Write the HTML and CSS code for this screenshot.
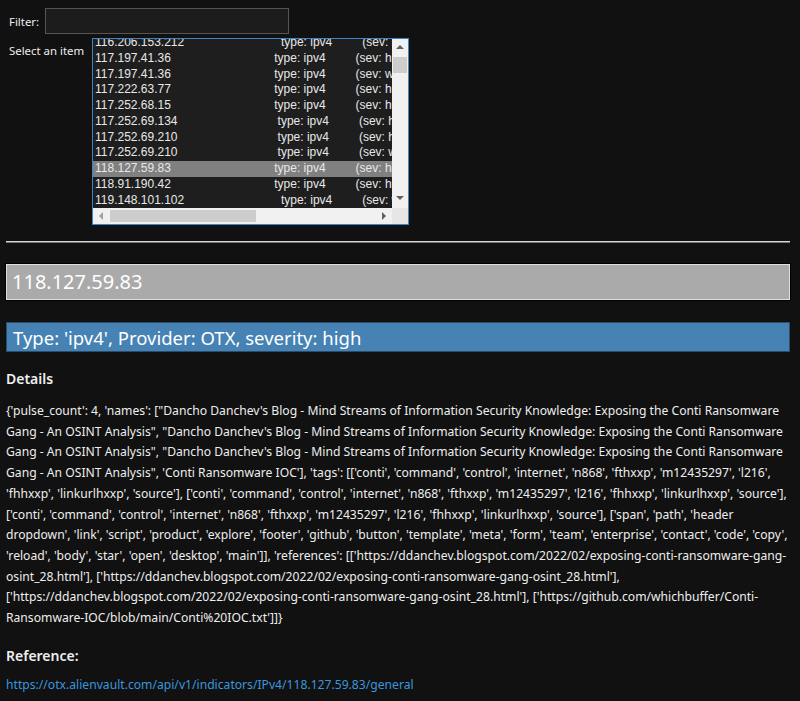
FILE: index.html
```html
<!DOCTYPE html>
<html lang="en">

<head>
    <meta charset="UTF-8">
    <title>Indicator viewer</title>
    <link rel="stylesheet" href="styles.css">
</head>

<body>
    <div class="form">
        <div class="field">
            <label class="label label-filter" for="filter">Filter:</label>
            <input id="filter" class="filter" type="text">
        </div>
        <div class="field field-list">
            <span class="label label-list">Select an item</span>
            <div class="listbox">
                <div class="rows">
                    <ul class="items" id="items"></ul>
                </div>
                <div class="vscroll">
                    <span class="arrow up"></span>
                    <span class="vthumb"></span>
                    <span class="arrow down"></span>
                </div>
                <div class="hscroll">
                    <span class="arrow left"></span>
                    <span class="hthumb"></span>
                    <span class="arrow right"></span>
                </div>
                <div class="corner"></div>
            </div>
        </div>
    </div>

    <hr class="sep">

    <div class="indicator">118.127.59.83</div>
    <div class="summary">Type: 'ipv4', Provider: OTX, severity: high</div>

    <h3 class="heading">Details</h3>
    <!-- wrapped the same way the desktop label wraps it -->
    <p class="details">{'pulse_count': 4, 'names': ["Dancho Danchev's Blog - Mind Streams of Information Security Knowledge: Exposing the Conti Ransomware<br>Gang - An OSINT Analysis", "Dancho Danchev's Blog - Mind Streams of Information Security Knowledge: Exposing the Conti Ransomware<br>Gang - An OSINT Analysis", "Dancho Danchev's Blog - Mind Streams of Information Security Knowledge: Exposing the Conti Ransomware<br>Gang - An OSINT Analysis", 'Conti Ransomware IOC'], 'tags': [['conti', 'command', 'control', 'internet', 'n868', 'fthxxp', 'm12435297', 'l216',<br>'fhhxxp', 'linkurlhxxp', 'source'], ['conti', 'command', 'control', 'internet', 'n868', 'fthxxp', 'm12435297', 'l216', 'fhhxxp', 'linkurlhxxp', 'source'],<br>['conti', 'command', 'control', 'internet', 'n868', 'fthxxp', 'm12435297', 'l216', 'fhhxxp', 'linkurlhxxp', 'source'], ['span', 'path', 'header<br>dropdown', 'link', 'script', 'product', 'explore', 'footer', 'github', 'button', 'template', 'meta', 'form', 'team', 'enterprise', 'contact', 'code', 'copy',<br>'reload', 'body', 'star', 'open', 'desktop', 'main']], 'references': [['https://ddanchev.blogspot.com/2022/02/exposing-conti-ransomware-gang-<br>osint_28.html'], ['https://ddanchev.blogspot.com/2022/02/exposing-conti-ransomware-gang-osint_28.html'],<br>['https://ddanchev.blogspot.com/2022/02/exposing-conti-ransomware-gang-osint_28.html'], ['https://github.com/whichbuffer/Conti-<br>Ransomware-IOC/blob/main/Conti%20IOC.txt']]}</p>

    <h3 class="heading">Reference:</h3>
    <a class="ref" href="https://otx.alienvault.com/api/v1/indicators/IPv4/118.127.59.83/general">https://otx.alienvault.com/api/v1/indicators/IPv4/118.127.59.83/general</a>

    <script src="script.js"></script>
</body>

</html>
```

FILE: styles.css
```css
* {
    box-sizing: border-box;
}

body {
    margin: 0;
    padding: 0 10px 0 6px;
    background: #111;
    color: #eee;
    font-family: "Noto Sans", "Open Sans", sans-serif;
    font-size: 12.15px;
}

/* top form: filter + list */
.form {
    padding: 8px 0 0 3px;
}

.field {
    display: flex;
    align-items: center;
}

.label {
    font-size: 11.4px;
}

.label-filter {
    width: 36px;
}

.field-list {
    align-items: flex-start;
    margin-top: 4px;
}

.label-list {
    width: 83px;
    padding-top: 5px;
}

.filter {
    width: 244px;
    height: 26px;
    margin: 0;
    background: #1c1c1c;
    border: 1px solid #555;
    color: #eee;
}

.listbox {
    display: grid;
    grid-template-columns: 299px 16px;
    grid-template-rows: 169px 16px;
    border: 1px solid #3d85c6;
    background: #1e1e1e;
}

.rows {
    overflow: hidden;
}

.items {
    margin: -4px 0 0;
    padding: 0;
    list-style: none;
    font-family: "Liberation Sans", Arial, sans-serif;
    font-size: 12px;
    line-height: 15.75px;
    white-space: pre;
    color: #e8e8e8;
}

.items li {
    padding-left: 2px;
}

.items li.current {
    background: #808080;
}

/* scrollbars */
.vscroll,
.hscroll {
    background: #f0f0f0;
}

.corner {
    background: #e6e6e6;
}

.vscroll {
    display: flex;
    flex-direction: column;
    align-items: center;
}

.hscroll {
    display: flex;
    align-items: center;
}

.vthumb {
    width: 14px;
    height: 16px;
    margin-top: 8px;
    background: #cdcdcd;
}

.hthumb {
    width: 146px;
    height: 12px;
    margin-left: 7px;
    background: #cdcdcd;
}

.arrow {
    width: 0;
    height: 0;
    border: 4px solid transparent;
}

.arrow.up {
    margin-top: 6px;
    border-top: 0;
    border-bottom: 4px solid #606060;
}

.arrow.down {
    margin-top: auto;
    margin-bottom: 8px;
    border-bottom: 0;
    border-top: 4px solid #606060;
}

.arrow.left {
    margin-left: 6px;
    border-left: 0;
    border-right: 4px solid #a0a0a0;
}

.arrow.right {
    margin-left: auto;
    margin-right: 6px;
    border-right: 0;
    border-left: 4px solid #606060;
}

/* detail area */
.sep {
    margin: 16px 0 0;
    border: 0;
    border-top: 1px solid #d4d4d4;
    border-bottom: 1px solid #777;
}

.indicator {
    margin-top: 21px;
    height: 36px;
    padding: 3px 5px;
    background: #aaa;
    border: 1px solid #e0e0e0;
    box-shadow: 0 0 0 1px #000;
    color: #fff;
    font-size: 20px;
    line-height: 28px;
}

.summary {
    margin-top: 22px;
    height: 30px;
    padding: 2px 6px;
    background: #4682b4;
    border: 1px solid #2b4d6b;
    color: #fff;
    font-size: 18.5px;
    line-height: 26px;
}

.heading {
    margin: 17px 0 0;
    font-size: 14px;
    font-weight: 600;
    line-height: 20px;
}

.details {
    margin: 12px -8px 0 0;
    line-height: 20.7px;
    white-space: nowrap;
}

.ref {
    display: inline-block;
    margin-top: 10px;
    color: #3a96dd;
    text-decoration: none;
}
```

FILE: script.js
```js
// list of indicators shown in the picker
var data = [
    ["116.206.153.212", "ipv4", "high"],
    ["117.197.41.36", "ipv4", "high"],
    ["117.197.41.36", "ipv4", "warning"],
    ["117.222.63.77", "ipv4", "high"],
    ["117.252.68.15", "ipv4", "high"],
    ["117.252.69.134", "ipv4", "high"],
    ["117.252.69.210", "ipv4", "high"],
    ["117.252.69.210", "ipv4", "warning"],
    ["118.127.59.83", "ipv4", "high"],
    ["118.91.190.42", "ipv4", "high"],
    ["119.148.101.102", "ipv4", "warning"],
    ["119.160.129.13", "ipv4", "high"]
];

var ul = document.querySelector("#items");
for (var i = 0; i < data.length; i++) {
    var li = document.createElement("li");
    // same padding as the python side: ljust on each column
    li.textContent = data[i][0].padEnd(44) + ("type: " + data[i][1]).padEnd(19) + "(sev: " + data[i][2] + ")";
    if (data[i][0] === "118.127.59.83") li.className = "current";
    ul.appendChild(li);
}
```
